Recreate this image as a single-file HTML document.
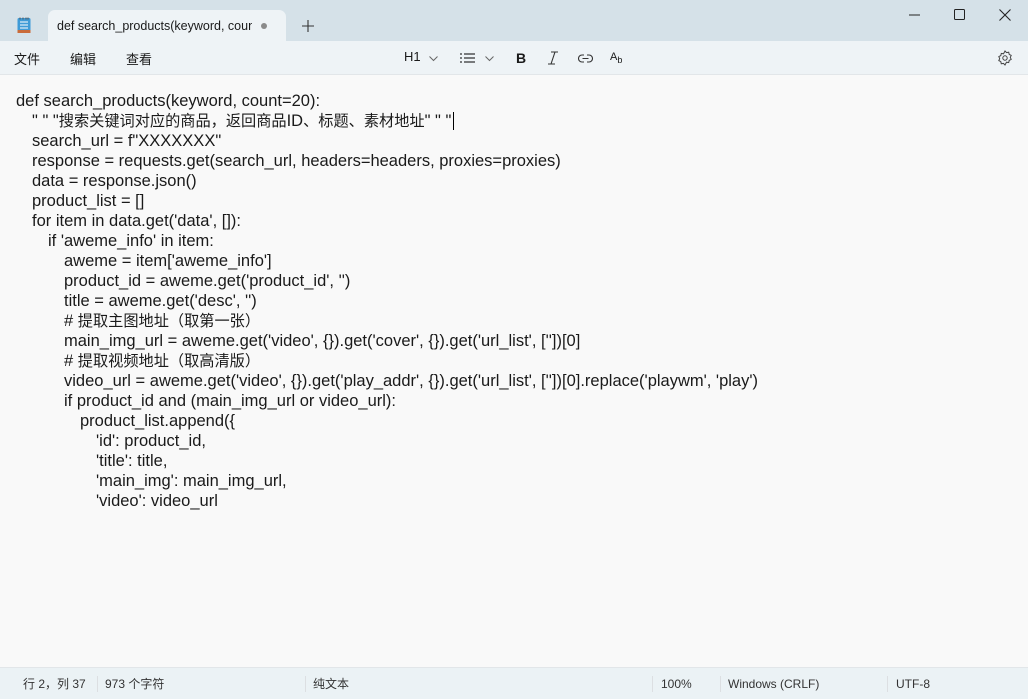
<!DOCTYPE html>
<html><head><meta charset="utf-8"><style>
*{margin:0;padding:0;box-sizing:border-box}
body{width:1028px;height:699px;overflow:hidden;background:#f9f9f9;font-family:"Liberation Sans","Noto Sans CJK SC",sans-serif;color:#1a1a1a;position:relative}
.title{position:absolute;left:0;top:0;width:1028px;height:41px;background:#d5e1e8}
.tab{position:absolute;left:48px;top:10px;width:238px;height:31px;background:#eef3f6;border-radius:7px 7px 0 0;font-size:12.5px;color:#1a1a1a}
.tabt{position:absolute;left:9px;top:9px;width:195px;overflow:hidden;white-space:nowrap}
.dot{position:absolute;left:213px;top:13px;width:6px;height:6px;border-radius:3px;background:#8a8a8a}
.menu{position:absolute;left:0;top:41px;width:1028px;height:34px;background:#eef3f6;border-bottom:1px solid #e2e6e9;font-size:13px}
.menu span{position:absolute;top:8px}
.code{position:absolute;left:0;top:91px;font-size:16.5px;line-height:20px;white-space:nowrap}
.code div{height:20px}
.c{font-size:15.2px}
.status{position:absolute;left:0;top:667px;width:1028px;height:32px;background:#ebf2f5;border-top:1px solid #e2e6e9;font-size:12px;color:#333}
.status span{position:absolute;top:9px}
.sep{position:absolute;top:8px;width:1px;height:16px;background:#dcdfe2}
</style></head><body>
<div class="title">
<svg style="position:absolute;left:17px;top:17px" width="14" height="17" viewBox="0 0 14 17"><rect x="0.5" y="1" width="13" height="15" rx="1.5" fill="#3f9bd7"/><rect x="0.5" y="13" width="13" height="3" fill="#c96b3a"/><path d="M3 5h8M3 8h8M3 11h8" stroke="#fff" stroke-width="1"/><path d="M3 0.5v2M6 0.5v2M9 0.5v2M11 .5v2" stroke="#555" stroke-width="1"/></svg>
<div class="tab"><div class="tabt">def search_products(keyword, coun</div><div class="dot"></div></div>
<svg style="position:absolute;left:302px;top:20px" width="12" height="12"><path d="M6 0v12M0 6h12" stroke="#333" stroke-width="1.1"/></svg>
<svg style="position:absolute;left:909px;top:14px" width="12" height="2"><path d="M0 1h11" stroke="#222" stroke-width="1"/></svg>
<svg style="position:absolute;left:954px;top:9px" width="11" height="11"><rect x=".5" y=".5" width="10" height="10" rx="1" fill="none" stroke="#222"/></svg>
<svg style="position:absolute;left:999px;top:9px" width="12" height="12"><path d="M.5 .5l11 11M11.5 .5l-11 11" stroke="#222" stroke-width="1.1"/></svg>
</div>
<div class="menu">
<span style="left:14px">文件</span><span style="left:70px">编辑</span><span style="left:126px">查看</span>
<span style="left:404px">H1</span>
<svg style="position:absolute;left:429px;top:15px" width="9" height="6"><path d="M.5 .5l4 4 4-4" fill="none" stroke="#666"/></svg>
<svg style="position:absolute;left:460px;top:12px" width="15" height="10"><path d="M0 1h2M0 5h2M0 9h2M4 1h11M4 5h11M4 9h11" stroke="#333" stroke-width="1.2"/></svg>
<svg style="position:absolute;left:485px;top:15px" width="9" height="6"><path d="M.5 .5l4 4 4-4" fill="none" stroke="#666"/></svg>
<span style="left:516px;font-weight:bold;font-size:14px;top:9px">B</span>
<svg style="position:absolute;left:546px;top:10px" width="14" height="15"><path d="M5 1h7M2 13h7M9 1L5 13" stroke="#333" stroke-width="1.1" fill="none"/></svg>
<svg style="position:absolute;left:578px;top:13px" width="15" height="9"><path d="M6 1H4a3.5 3.5 0 000 7h2M9 1h2a3.5 3.5 0 010 7H9M4.5 4.5h6" stroke="#333" stroke-width="1.1" fill="none"/></svg>
<span style="left:610px;font-size:11px;top:10px">A<sub style="font-size:9px">b</sub></span>
<svg style="position:absolute;left:997px;top:9px" width="16" height="16" viewBox="0 0 16 16"><path d="M8 1l1.5 1.6 2.2-.4.5 2.2 2 1-.9 2 .9 2-2 1-.5 2.2-2.2-.4L8 15l-1.5-1.6-2.2.4-.5-2.2-2-1 .9-2-.9-2 2-1 .5-2.2 2.2.4z" fill="none" stroke="#444"/><circle cx="8" cy="8" r="2.2" fill="none" stroke="#444"/></svg>
</div>
<div class="code"><div style="padding-left:16px">def search_products(keyword, count=20):</div><div style="padding-left:32px">" " "<span class="c">搜索关键词对应的商品，返回商品</span>ID<span class="c">、标题、素材地址</span>" " "<span style="border-left:1px solid #000;margin-left:2px"></span></div><div style="padding-left:32px">search_url = f"XXXXXXX"</div><div style="padding-left:32px">response = requests.get(search_url, headers=headers, proxies=proxies)</div><div style="padding-left:32px">data = response.json()</div><div style="padding-left:32px">product_list = []</div><div style="padding-left:32px">for item in data.get('data', []):</div><div style="padding-left:48px">if 'aweme_info' in item:</div><div style="padding-left:64px">aweme = item['aweme_info']</div><div style="padding-left:64px">product_id = aweme.get('product_id', '')</div><div style="padding-left:64px">title = aweme.get('desc', '')</div><div style="padding-left:64px"># <span class="c">提取主图地址（取第一张）</span></div><div style="padding-left:64px">main_img_url = aweme.get('video', {}).get('cover', {}).get('url_list', [''])[0]</div><div style="padding-left:64px"># <span class="c">提取视频地址（取高清版）</span></div><div style="padding-left:64px">video_url = aweme.get('video', {}).get('play_addr', {}).get('url_list', [''])[0].replace('playwm', 'play')</div><div style="padding-left:64px">if product_id and (main_img_url or video_url):</div><div style="padding-left:80px">product_list.append({</div><div style="padding-left:96px">'id': product_id,</div><div style="padding-left:96px">'title': title,</div><div style="padding-left:96px">'main_img': main_img_url,</div><div style="padding-left:96px">'video': video_url</div></div>
<div class="status">
<span style="left:23px;top:7px">行 2，列 37</span><div class="sep" style="left:97px"></div>
<span style="left:105px;top:7px">973 个字符</span><div class="sep" style="left:305px"></div>
<span style="left:313px;top:7px">纯文本</span><div class="sep" style="left:652px"></div>
<span style="left:661px">100%</span><div class="sep" style="left:720px"></div>
<span style="left:728px">Windows (CRLF)</span><div class="sep" style="left:887px"></div>
<span style="left:896px">UTF-8</span>
</div>
</body></html>
